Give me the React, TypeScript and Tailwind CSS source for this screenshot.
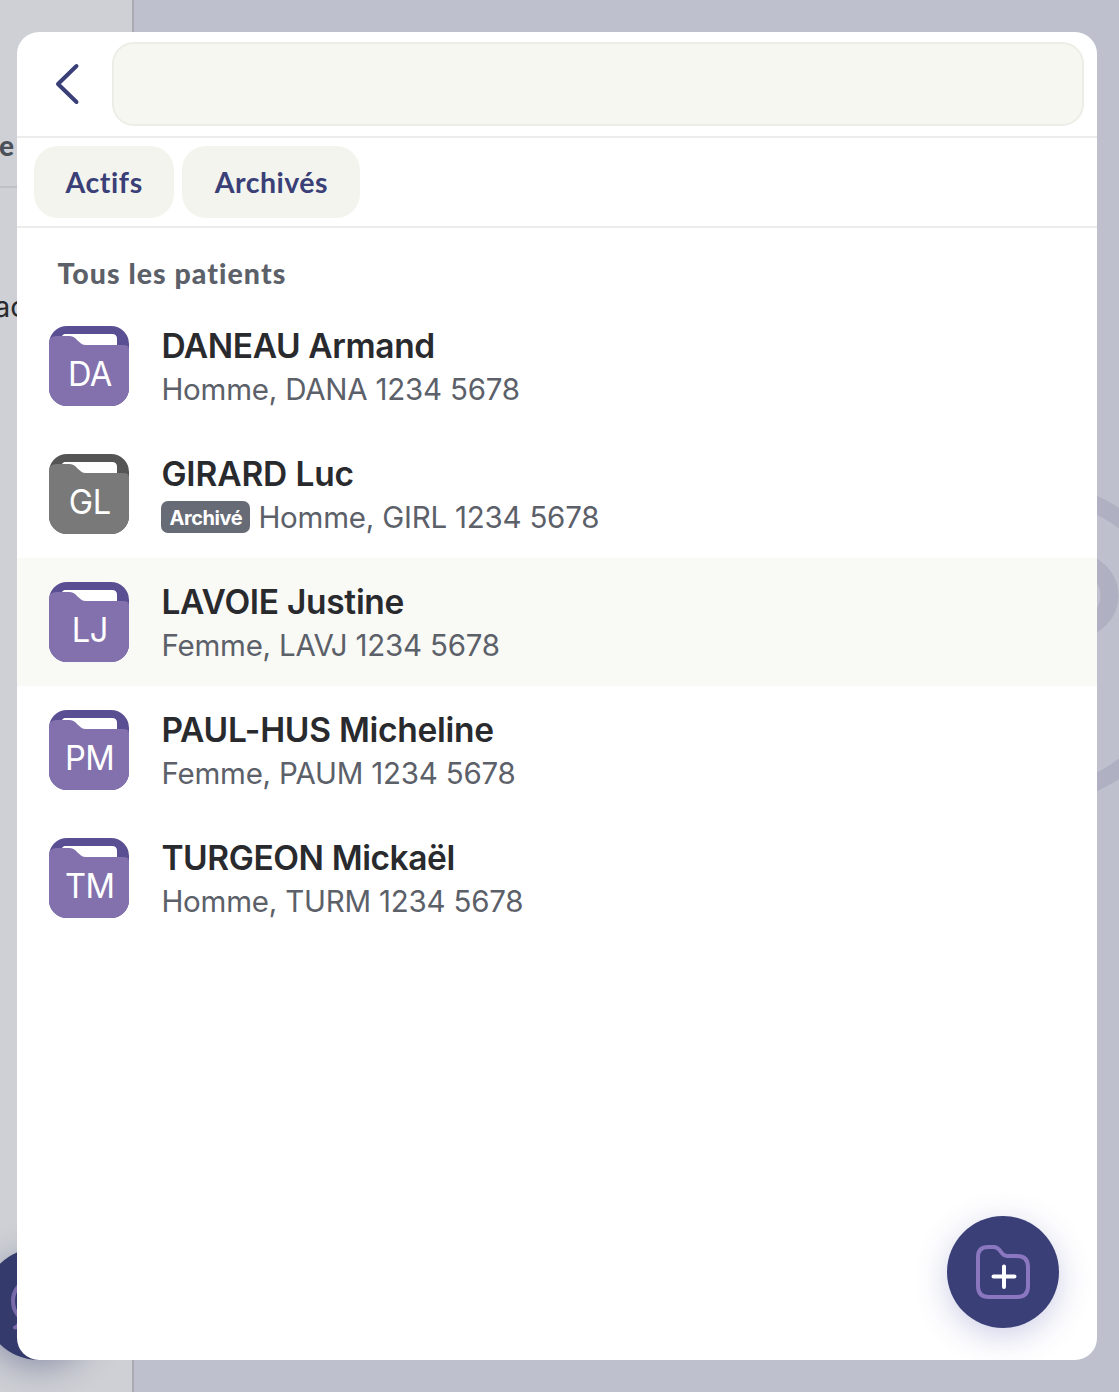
import React from "react";

type Patient = {
  initials: string;
  name: string;
  details: string;
  archived?: boolean;
  selected?: boolean;
  nameSpacing: string;
};

const patients: Patient[] = [
  { initials: "DA", name: "DANEAU Armand", details: "Homme, DANA 1234 5678", nameSpacing: "tracking-[-0.4px]" },
  { initials: "GL", name: "GIRARD Luc", details: "Homme, GIRL 1234 5678", archived: true, nameSpacing: "tracking-[-0.15px]" },
  { initials: "LJ", name: "LAVOIE Justine", details: "Femme, LAVJ 1234 5678", selected: true, nameSpacing: "tracking-[-0.3px]" },
  { initials: "PM", name: "PAUL-HUS Micheline", details: "Femme, PAUM 1234 5678", nameSpacing: "tracking-[-0.27px]" },
  { initials: "TM", name: "TURGEON Mickaël", details: "Homme, TURM 1234 5678", nameSpacing: "tracking-[-0.42px]" },
];

function FolderAvatar({ initials, archived }: { initials: string; archived?: boolean }) {
  return (
    <div className="relative h-20 w-20 shrink-0 overflow-hidden rounded-[18px]">
      <svg viewBox="0 0 80 80" className="block h-20 w-20">
        <rect width="80" height="80" fill={archived ? "#555555" : "#5b4f93"} />
        <path d="M13 10C14 8.500 15 8 17 8H63Q68 8 68 13V24H13Z" fill="#fff" />
        <path
          d="M0 17Q0 10 8 10H20Q25 10 28 14L32 17.500Q34 19 37 19H74Q80 19 80 23V80H0Z"
          fill={archived ? "#797979" : "#8371ae"}
        />
      </svg>
      <span className="absolute inset-x-0 top-[28px] text-center text-[34px] leading-10 tracking-[-0.6px] text-white">
        <span className="inline-block scale-x-[0.96]">{initials}</span>
      </span>
    </div>
  );
}

function PatientRow({ patient }: { patient: Patient }) {
  return (
    <li className={`flex h-32 items-center pl-8 ${patient.selected ? "bg-[#f9faf6]" : ""}`}>
      <FolderAvatar initials={patient.initials} archived={patient.archived} />
      <div className="ml-8 flex flex-col pt-[3px]">
        <span className={`h-[43px] whitespace-nowrap text-[33.5px] leading-[43px] font-[560] text-[#292a2e] ${patient.nameSpacing}`}>
          {patient.name}
        </span>
        <span className="flex h-[42px] items-center">
          {patient.archived && (
            <span className="mr-2 flex h-8 w-[89px] items-center justify-center rounded-[7px] bg-[#666b76] pt-px text-[20px] font-bold tracking-[-0.4px] text-white">
              Archivé
            </span>
          )}
          <span className="whitespace-nowrap text-[29.5px] leading-[42px] tracking-[-0.22px] text-[#5c6069]">
            {patient.details}
          </span>
        </span>
      </div>
    </li>
  );
}

function Backdrop() {
  return (
    <div className="absolute inset-0 flex overflow-hidden">
      <div className="relative w-[133.5px] shrink-0 overflow-hidden border-r-2 border-[#aaabb2] bg-[#ced0d5]">
        <span className="absolute top-[129px] -left-px font-['Lato'] text-[28px] leading-8 font-black text-[#4c5058]">e</span>
        <div className="absolute top-[186px] h-0.5 w-full bg-[#bfc1c6]" />
        <span className="absolute top-[289px] -left-[6px] text-[29px] leading-9 text-[#292a2e]">ac</span>
        <div className="absolute top-[1248px] -left-[17px] h-28 w-28 rounded-full bg-[#343a6c] shadow-[0_8px_32px_rgba(52,58,108,0.4)]">
          <svg viewBox="0 0 112 112" className="h-28 w-28" fill="none" stroke="#7869aa" strokeWidth="4" strokeLinecap="round">
            <ellipse cx="45" cy="53" rx="15" ry="19" />
            <path d="M32 79.500C34 79.500 35 78 36 76" />
          </svg>
        </div>
      </div>
      <svg viewBox="133.5 0 985.5 1392" className="h-[1392px] w-[985.5px] shrink-0 bg-[#bec0cd]" fill="none" stroke="#afb1c3">
        <circle cx="1031" cy="643.500" r="153" strokeWidth="17" />
        <circle cx="1076" cy="595.500" r="33" strokeWidth="18" />
      </svg>
    </div>
  );
}

export default function App() {
  return (
    <div className="relative h-[1392px] w-[1119px] overflow-hidden font-['Inter',sans-serif]">
      <Backdrop />
      <main className="relative mt-8 ml-[17.4px] flex h-[1328px] w-[1080px] flex-col overflow-hidden rounded-[22px] bg-white">
        <header className="flex h-[106px] shrink-0 border-b-2 border-[#ececea]">
          <button aria-label="Retour" className="flex h-[104px] w-[94.5px] shrink-0 items-center justify-center">
            <svg width="26" height="44" viewBox="0 0 26 44" fill="none" stroke="#3a3f77" strokeWidth="4" strokeLinecap="round" strokeLinejoin="round" className="ml-1">
              <path d="M22.500 4L4 22L22.500 40" />
            </svg>
          </button>
          <input aria-label="Rechercher" className="mt-[10px] h-[84px] w-[972px] rounded-[22px] border-2 border-[#ecede6] bg-[#f6f7f1] px-6 outline-none" />
        </header>
        <nav className="flex h-[90px] shrink-0 gap-2 border-b-2 border-[#ececea] pt-2 pl-[16.5px] font-['Lato'] text-[28.5px] font-bold text-[#3a3f77]">
          <button className="h-[72px] w-[140.5px] rounded-[24px] bg-[#f3f4ee] pt-px tracking-[0.6px]">Actifs</button>
          <button className="h-[72px] w-[178px] rounded-[24px] bg-[#f3f4ee] pt-px tracking-[0.5px]">Archivés</button>
        </nav>
        <h1 className="h-[74px] shrink-0 pt-[25px] pl-10 font-['Lato'] text-[28.5px] leading-10 font-black tracking-[1.05px] text-[#5c6069]">
          Tous les patients
        </h1>
        <ul className="flex flex-col">
          {patients.map((patient) => (
            <PatientRow key={patient.initials} patient={patient} />
          ))}
        </ul>
        <button aria-label="Ajouter un patient" className="absolute right-[38px] bottom-8 h-28 w-28 rounded-full bg-[#3a3f77] shadow-[0_8px_32px_rgba(58,63,160,0.25)]">
          <svg viewBox="0 0 112 112" className="h-28 w-28" fill="none" strokeWidth="4" strokeLinecap="round" strokeLinejoin="round">
            <path d="M31 41Q31 31 41 31H46.500C50.500 31 52 33 54 36C56 39 57 40 60 40H70Q81 40 81 51V70Q81 81 70 81H42Q31 81 31 70Z" stroke="#8b77c0" />
            <path d="M57 50.500V71M46.500 60.500H67.500" stroke="#fff" />
          </svg>
        </button>
      </main>
    </div>
  );
}
